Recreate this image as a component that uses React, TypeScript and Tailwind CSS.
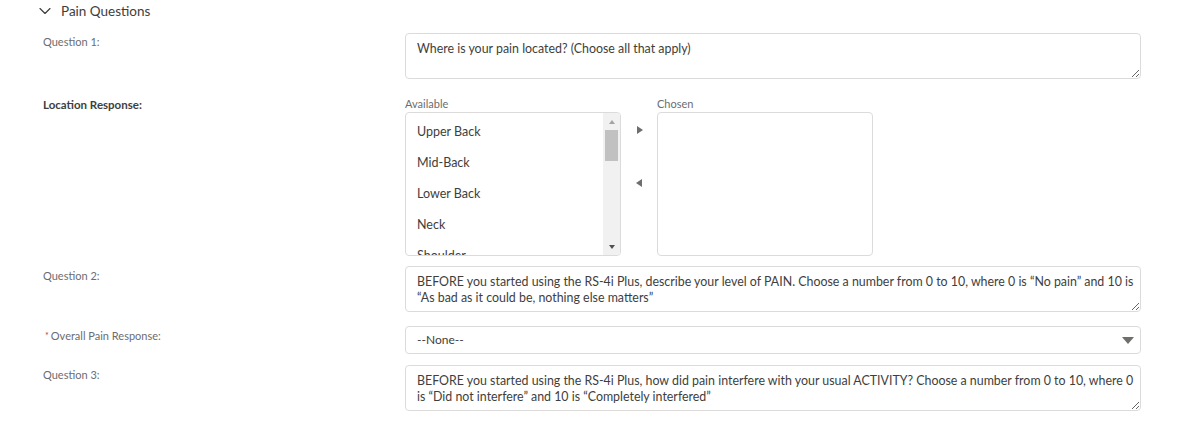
import { ChevronDown } from "lucide-react";

const locations = ["Upper Back", "Mid-Back", "Lower Back", "Neck", "Shoulder", "Hip", "Knee"];

function Label({ text, bold, required }: { text: string; bold?: boolean; required?: boolean }) {
    return (
        <div className={`leading-[16px] ${bold ? "text-[11.5px] font-bold text-[#3e3e3c]" : "text-[11px] text-[#6b6d70]"}`}>
            {required && <span className="text-[#c23934] text-[9px] align-top mr-[2px] ml-[2px]">*</span>}
            {text}
        </div>
    );
}

function Question({ value }: { value: string }) {
    return (
        <textarea
            readOnly
            wrap="off"
            value={value}
            className="block w-full h-[46px] border border-[#dddbda] rounded-[4px] pl-[11px] pr-0 pt-[7px] pb-0 text-[12.4px] leading-[16px] text-[#3e3e3c] outline-none bg-white overflow-hidden"
        />
    );
}

export default function App() {
    return (
        <div className="w-[1181px] h-[422px] overflow-hidden bg-white font-['Lato','Liberation_Sans',sans-serif] text-[#3e3e3c]">
            <div className="flex items-center h-[22px] pl-[35px] gap-[6px]">
                <ChevronDown size={20} strokeWidth={1.4} className="text-[#3e3e3c]" />
                <span className="text-[13.5px] leading-[20px]">Pain Questions</span>
            </div>

            <div className="pl-[43px] pr-[40px] flex flex-col">
                <div className="grid grid-cols-[362px_1fr] mt-[11px]">
                    <div className="pt-[1px]"><Label text="Question 1:" /></div>
                    <Question value="Where is your pain located? (Choose all that apply)" />
                </div>

                <div className="grid grid-cols-[362px_1fr] mt-[18px]">
                    <Label text="Location Response:" bold />
                    <div className="flex">
                        <div className="flex flex-col w-[216px]">
                            <div className="text-[11px] leading-[14px] mb-[1px] text-[#6b6d70]">Available</div>
                            <div className="flex h-[144px] border border-[#dddbda] rounded-[4px] overflow-hidden">
                                <div className="flex-1 pt-[4px] pl-[11px] overflow-hidden">
                                    {locations.map((l) => (
                                        <div key={l} className="h-[31px] flex items-center text-[12.5px]">{l}</div>
                                    ))}
                                </div>
                                <div className="w-[17px] bg-[#f1f1f1] flex flex-col items-center">
                                    <div className="h-[17px] flex items-center justify-center">
                                        <div className="w-0 h-0 border-l-[3.5px] border-r-[3.5px] border-b-[4px] border-l-transparent border-r-transparent border-b-[#a3a3a3]" />
                                    </div>
                                    <div className="w-[13px] h-[31px] bg-[#c1c1c1]" />
                                    <div className="flex-1" />
                                    <div className="h-[17px] flex items-center justify-center">
                                        <div className="w-0 h-0 border-l-[3.5px] border-r-[3.5px] border-t-[4px] border-l-transparent border-r-transparent border-t-[#505050]" />
                                    </div>
                                </div>
                            </div>
                        </div>
                        <div className="w-[36px] flex flex-col items-center pt-[29px]">
                            <div className="w-0 h-0 border-t-[4.5px] border-b-[4.5px] border-l-[6px] border-t-transparent border-b-transparent border-l-[#706e6b] ml-[1px]" />
                            <div className="w-0 h-0 border-t-[4.5px] border-b-[4.5px] border-r-[6px] border-t-transparent border-b-transparent border-r-[#706e6b] mt-[45px]" />
                        </div>
                        <div className="flex flex-col w-[216px]">
                            <div className="text-[11px] leading-[14px] mb-[1px] text-[#6b6d70]">Chosen</div>
                            <div className="h-[144px] border border-[#dddbda] rounded-[4px]" />
                        </div>
                    </div>
                </div>

                <div className="grid grid-cols-[362px_1fr] mt-[10px]">
                    <div className="pt-[2px]"><Label text="Question 2:" /></div>
                    <Question value={"BEFORE you started using the RS-4i Plus, describe your level of PAIN. Choose a number from 0 to 10, where 0 is \u201cNo pain\u201d and 10 is\n\u201cAs bad as it could be, nothing else matters\u201d"} />
                </div>

                <div className="grid grid-cols-[362px_1fr] mt-[14px]">
                    <div className="pt-[2px]"><Label text="Overall Pain Response:" required /></div>
                    <div className="h-[28px] border border-[#dddbda] rounded-[4px] flex items-center justify-between pl-[11px] pr-[6px] text-[12px]">
                        <span>--None--</span>
                        <div className="w-0 h-0 border-l-[6px] border-r-[6px] border-t-[7px] border-l-transparent border-r-transparent border-t-[#706e6b]" />
                    </div>
                </div>

                <div className="grid grid-cols-[362px_1fr] mt-[11px]">
                    <div className="pt-[2px]"><Label text="Question 3:" /></div>
                    <Question value={"BEFORE you started using the RS-4i Plus, how did pain interfere with your usual ACTIVITY? Choose a number from 0 to 10, where 0\nis \u201cDid not interfere\u201d and 10 is \u201cCompletely interfered\u201d"} />
                </div>
            </div>
        </div>
    );
}
